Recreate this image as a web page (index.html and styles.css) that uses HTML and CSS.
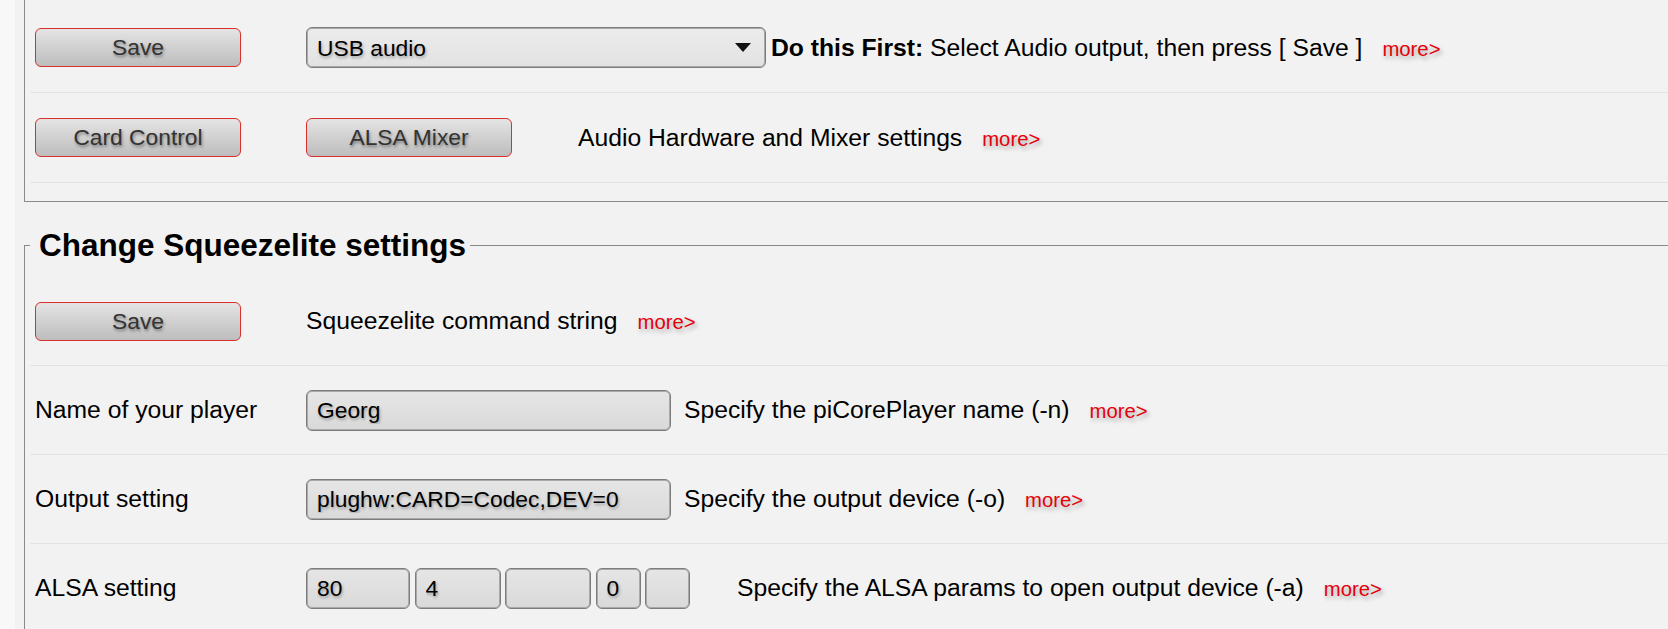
FILE: index.html
```html
<!DOCTYPE html>
<html>
<head>
    <title>Squeezelite Settings</title>
    <link rel="stylesheet" href="styles.css">
</head>
<body>
    <div class="page">
        <fieldset class="box top">
            <div class="row">
                <div class="cell c1"><button class="btn">Save</button></div>
                <div class="cell c2">
                    <span class="select-wrap">
                        <select class="field select">
                            <option>USB audio</option>
                        </select>
                    </span>
                </div>
                <div class="cell c3"><b>Do this First:</b> Select Audio output, then press [ Save ]<a href="#" class="more">more&gt;</a></div>
            </div>
            <div class="row">
                <div class="cell c1"><button class="btn">Card Control</button></div>
                <div class="cell c2"><button class="btn">ALSA Mixer</button></div>
                <div class="cell c3">Audio Hardware and Mixer settings<a href="#" class="more">more&gt;</a></div>
            </div>
        </fieldset>

        <fieldset class="box">
            <legend>Change Squeezelite settings</legend>
            <div class="row">
                <div class="cell c1"><button class="btn">Save</button></div>
                <div class="cell c2">Squeezelite command string<a href="#" class="more">more&gt;</a></div>
            </div>
            <div class="row">
                <div class="cell c1">Name of your player</div>
                <div class="cell c2"><input class="field text" type="text" value="Georg"></div>
                <div class="cell c3">Specify the piCorePlayer name (-n)<a href="#" class="more">more&gt;</a></div>
            </div>
            <div class="row">
                <div class="cell c1">Output setting</div>
                <div class="cell c2"><input class="field text" type="text" value="plughw:CARD=Codec,DEV=0"></div>
                <div class="cell c3">Specify the output device (-o)<a href="#" class="more">more&gt;</a></div>
            </div>
            <div class="row">
                <div class="cell c1">ALSA setting</div>
                <div class="cell c2 alsa">
                    <input class="field w-buffer" type="text" value="80">
                    <input class="field w-mid" type="text" value="4">
                    <input class="field w-mid" type="text" value="">
                    <input class="field w-small" type="text" value="0">
                    <input class="field w-small" type="text" value="">
                </div>
                <div class="cell c3">Specify the ALSA params to open output device (-a)<a href="#" class="more">more&gt;</a></div>
            </div>
        </fieldset>
    </div>
</body>
</html>
```

FILE: styles.css
```css
html, body {
    overflow: hidden;
}
body {
    margin: 0;
    background-color: #f8f8f8;
    font-family: 'Liberation Sans', Arial, sans-serif;
    font-size: 24.7px;
    color: #000;
}
.page {
    margin-left: 15px;
    padding-left: 9px;
    min-height: 629px;
    background-color: #f2f2f2;
}
.box {
    margin: 0 -40px 0 0;
    padding: 13px 0 18px 5px;
    border: 1px solid #8a8a8a;
}
.box.top {
    border-top: none;
    padding-top: 3px;
}
.box + .box {
    margin-top: 25px;
}
legend {
    padding: 0 4px 0 9px;
    font-size: 31.5px;
    font-weight: bold;
}
.row {
    display: flex;
    align-items: center;
    height: 88px;
    border-bottom: 1px solid #e3e3e3;
}
.top .row {
    height: 89px;
}
.cell {
    box-sizing: border-box;
    padding-left: 5px;
    white-space: nowrap;
}
.c1 {
    width: 271px;
    flex-shrink: 0;
}
.c2 {
    min-width: 272px;
    flex-shrink: 0;
}
.c2.alsa {
    width: 431px;
    display: flex;
    gap: 4.5px;
}
.more {
    margin-left: 20px;
    font-size: 20.3px;
    color: #e5000a;
    text-decoration: none;
    text-shadow: 2px 3px 4px #a8a8a8;
}
.btn {
    box-sizing: border-box;
    width: 206px;
    height: 39px;
    padding: 0;
    border: 1px solid #d9302b;
    border-radius: 6px;
    background: linear-gradient(#e4e4e4, #bdbdbd);
    font-family: 'Liberation Sans', Arial, sans-serif;
    font-size: 22.8px;
    color: #333;
    text-shadow: 1px 2px 3px rgba(0, 0, 0, 0.4);
    cursor: pointer;
}
.btn:hover {
    background: linear-gradient(#ececec, #c8c8c8);
}
.field {
    box-sizing: border-box;
    height: 41px;
    margin: 0;
    padding: 0 0 0 10px;
    border: 1px solid #7d7d7d;
    border-radius: 6px;
    box-shadow: inset 0 0 0 1px #a9a9a9;
    background: linear-gradient(#e6e6e6, #d9d9d9);
    font-family: 'Liberation Sans', Arial, sans-serif;
    font-size: 22.8px;
    color: #000;
    text-shadow: 1px 2px 3px rgba(0, 0, 0, 0.3);
    outline: none;
}
.text {
    width: 365px;
    margin-right: 8px;
}
.w-buffer {
    width: 104px;
}
.w-mid {
    width: 86px;
}
.w-small {
    width: 45px;
}
.select-wrap {
    position: relative;
    display: inline-block;
}
.select {
    display: block;
    width: 460px;
    -webkit-appearance: none;
    appearance: none;
    background: linear-gradient(#ececec, #e2e2e2);
}
.select-wrap::after {
    content: "";
    position: absolute;
    right: 15px;
    top: 16px;
    border-left: 8px solid transparent;
    border-right: 8px solid transparent;
    border-top: 9px solid #111;
    pointer-events: none;
}
```
